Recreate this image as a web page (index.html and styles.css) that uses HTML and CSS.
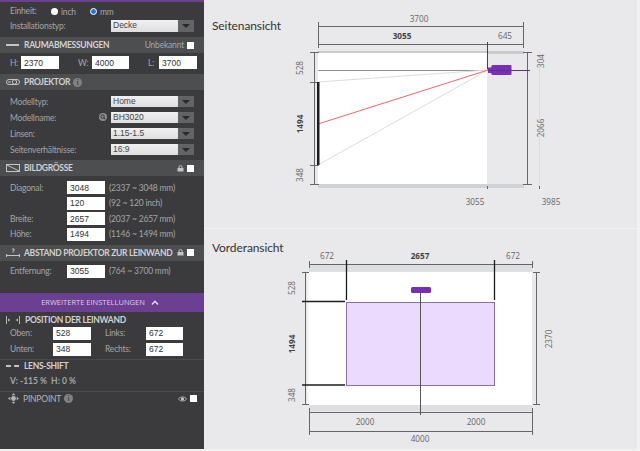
FILE: index.html
```html
<!DOCTYPE html>
<html lang="de">
<head>
    <meta charset="UTF-8">
    <meta name="viewport" content="width=device-width, initial-scale=1.0">
    <title>Projektionsrechner</title>
    <link rel="stylesheet" href="styles.css">
</head>
<body>
    <div class="app">
        <aside class="sidebar">
            <div class="unit-row">
                <span class="label unit-label">Einheit:</span>
                <input type="radio" name="unit" class="radio">
                <span class="label unit-name">inch</span>
                <input type="radio" name="unit" class="radio" checked>
                <span class="label unit-name">mm</span>
            </div>
            <div class="select-row install-row">
                <span class="label">Installationstyp:</span>
                <div class="select"><span>Decke</span><i></i></div>
            </div>

            <div class="sec-head room-head">
                <svg class="sec-icon" viewBox="0 0 14 10"><rect x="0" y="4" width="13" height="2" fill="#c4c4c4"/></svg>
                <span class="sec-title">RAUMABMESSUNGEN</span>
                <span class="label head-right">Unbekannt</span>
                <input type="checkbox" class="check">
            </div>
            <div class="room-row">
                <span class="label">H:</span><input type="text" class="field" value="2370">
                <span class="label">W:</span><input type="text" class="field" value="4000">
                <span class="label">L:</span><input type="text" class="field" value="3700">
            </div>

            <div class="sec-head">
                <svg class="sec-icon" viewBox="0 0 14 10" fill="none" stroke="#c4c4c4"><rect x="0.5" y="2.5" width="13" height="5" rx="2.5"/><circle cx="8.5" cy="5" r="2.2"/><line x1="2" y1="5" x2="5" y2="5"/></svg>
                <span class="sec-title">PROJEKTOR</span>
                <span class="info">i</span>
            </div>
            <div class="select-list">
                <div class="select-row">
                    <span class="label">Modelltyp:</span>
                    <div class="select"><span>Home</span><i></i></div>
                </div>
                <div class="select-row">
                    <span class="label">Modellname:</span>
                    <svg class="search" viewBox="0 0 8 8" fill="none" stroke="#2f2f30"><circle cx="4" cy="4" r="4" fill="#8d8d8d" stroke="none"/><circle cx="3.6" cy="3.6" r="1.7"/><line x1="4.9" y1="4.9" x2="6.4" y2="6.4"/></svg>
                    <div class="select"><span>BH3020</span><i></i></div>
                </div>
                <div class="select-row">
                    <span class="label">Linsen:</span>
                    <div class="select"><span>1.15-1.5</span><i></i></div>
                </div>
                <div class="select-row">
                    <span class="label">Seitenverhältnisse:</span>
                    <div class="select"><span>16:9</span><i></i></div>
                </div>
            </div>

            <div class="sec-head size-head">
                <svg class="sec-icon" viewBox="0 0 14 10" fill="none" stroke="#c4c4c4"><rect x="0.5" y="1.5" width="13" height="7"/><line x1="1" y1="2" x2="13" y2="8"/></svg>
                <span class="sec-title">BILDGRÖSSE</span>
                <svg class="lock head-right" viewBox="0 0 7 7" fill="none" stroke="#c4c4c4"><path d="M2 3V2a1.5 1.5 0 0 1 3 0v1"/><rect x="0.5" y="3" width="6" height="3.5" fill="#c4c4c4" stroke="none"/></svg>
                <input type="checkbox" class="check">
            </div>
            <div class="size-list">
                <div class="size-row">
                    <span class="label">Diagonal:</span><input type="text" class="field" value="3048">
                    <span class="label">(2337 ~ 3048 mm)</span>
                </div>
                <div class="size-row">
                    <span class="label"></span><input type="text" class="field" value="120">
                    <span class="label">(92 ~ 120 inch)</span>
                </div>
                <div class="size-row">
                    <span class="label">Breite:</span><input type="text" class="field" value="2657">
                    <span class="label">(2037 ~ 2657 mm)</span>
                </div>
                <div class="size-row">
                    <span class="label">Höhe:</span><input type="text" class="field" value="1494">
                    <span class="label">(1146 ~ 1494 mm)</span>
                </div>
            </div>

            <div class="sec-head">
                <svg class="sec-icon" viewBox="0 0 14 10" fill="none" stroke="#c4c4c4"><path d="M0.5 6v3M13.5 6v3M0.5 7.5h13"/><path d="M6 1h2v2H7v1.5"/></svg>
                <span class="sec-title">ABSTAND PROJEKTOR ZUR LEINWAND</span>
                <svg class="lock head-right" viewBox="0 0 7 7" fill="none" stroke="#c4c4c4"><path d="M2 3V2a1.5 1.5 0 0 1 3 0v1"/><rect x="0.5" y="3" width="6" height="3.5" fill="#c4c4c4" stroke="none"/></svg>
                <input type="checkbox" class="check">
            </div>
            <div class="size-row distance-row">
                <span class="label">Entfernung:</span><input type="text" class="field" value="3055">
                <span class="label">(764 ~ 3700 mm)</span>
            </div>

            <div class="advanced">
                <span>ERWEITERTE EINSTELLUNGEN</span>
                <svg viewBox="0 0 8 5" fill="none" stroke="#e4dcec" stroke-width="1.4"><path d="M1 4.5L4 1.2L7 4.5"/></svg>
            </div>

            <div class="plain-head position-head">
                <svg class="pos-icon" viewBox="0 0 14 8" fill="#b4b4b4"><rect x="0" y="0" width="1" height="8"/><path d="M2 2.5L4.5 4L2 5.5Z"/><rect x="13" y="0" width="1" height="8"/><path d="M12 2.5L9.5 4L12 5.5Z"/></svg>
                <span class="sec-title">POSITION DER LEINWAND</span>
            </div>
            <div class="position-grid">
                <span class="label">Oben:</span><input type="text" class="field" value="528">
                <span class="label">Links:</span><input type="text" class="field" value="672">
                <span class="label">Unten:</span><input type="text" class="field" value="348">
                <span class="label">Rechts:</span><input type="text" class="field" value="672">
            </div>

            <div class="lens">
                <div class="plain-head">
                    <span class="dashes"></span>
                    <span class="sec-title">LENS-SHIFT</span>
                </div>
                <div class="lens-values">V: -115 %&nbsp; H: 0 %</div>
            </div>

            <div class="pinpoint">
                <svg class="pin-icon" viewBox="0 0 12 12" fill="#b4b4b4"><path d="M6 0L8 2.5H4ZM6 12L4 9.5H8ZM0 6L2.5 4V8ZM12 6L9.5 8V4Z"/><circle cx="6" cy="6" r="2.6"/></svg>
                <span class="pin-title">PINPOINT</span>
                <span class="info">i</span>
                <svg class="eye head-right" viewBox="0 0 10 6" fill="none" stroke="#c4c4c4"><path d="M0.5 3C3 0 7 0 9.5 3C7 6 3 6 0.5 3Z"/><circle cx="5" cy="3" r="1.3" fill="#c4c4c4"/></svg>
                <input type="checkbox" class="check">
            </div>
        </aside>

        <main class="views">
            <section class="view side-view">
                <h2>Seitenansicht</h2>
                <svg class="drawing" viewBox="285 0 352 228">
                    <rect x="318" y="51" width="206" height="3" fill="#c9cbcf"/>
                    <rect x="318" y="184" width="206" height="4" fill="#d0d2d5"/>
                    <rect x="318" y="53" width="169" height="131" fill="#fff"/>
                    <line x1="539.5" y1="52" x2="539.5" y2="188" stroke="#dcdcde"/>

                    <g class="dim">
                        <path d="M318.5 22V48M523.5 22V48M318 26.500H524M318 44.500H524"/>
                        <path d="M314.500 52V185M310 52.500H319M310 82.500H319M310 165.500H319M310 184.500H319"/>
                        <path d="M527.500 52V185M523 52.500H532M523 184.500H532"/>
                        <path d="M487.500 186V189M539.500 186V189"/>
                    </g>
                    <line x1="487.500" y1="42" x2="487.500" y2="70" stroke="#444"/>
                    <path d="M318 70.500H479M487 70.500H530" stroke="#909090" fill="none"/>

                    <line x1="318" y1="82" x2="488" y2="70" stroke="#ddd"/>
                    <line x1="318" y1="165" x2="488" y2="70" stroke="#ddd"/>
                    <line x1="318" y1="124" x2="488" y2="70" stroke="#f4646c"/>
                    <rect x="317" y="82" width="2.500" height="83" fill="#1c1c1c"/>

                    <path d="M488 67.500H491L492 65H510.500Q511.500 65 511.500 66V74Q511.500 75 510.500 75H492L491 73H488Z" fill="#7a2dbb"/>
                    <line x1="488" y1="70.500" x2="530" y2="70.500" stroke="#553a70"/>

                    <text x="419" y="22" class="num" text-anchor="middle">3700</text>
                    <text x="402" y="39" class="num strong" text-anchor="middle">3055</text>
                    <text x="505" y="39" class="num" text-anchor="middle">645</text>
                    <text x="475" y="205" class="num" text-anchor="middle">3055</text>
                    <text x="551" y="205" class="num" text-anchor="middle">3985</text>
                    <text transform="translate(303 68) rotate(-90)" class="num" text-anchor="middle">528</text>
                    <text transform="translate(303 124) rotate(-90)" class="num strong" text-anchor="middle">1494</text>
                    <text transform="translate(303 175) rotate(-90)" class="num" text-anchor="middle">348</text>
                    <text transform="translate(544 61) rotate(-90)" class="num" text-anchor="middle">304</text>
                    <text transform="translate(544 128) rotate(-90)" class="num" text-anchor="middle">2066</text>
                </svg>
            </section>

            <section class="view front-view">
                <h2>Vorderansicht</h2>
                <svg class="drawing" viewBox="285 229 352 220">
                    <rect x="309" y="265" width="223" height="7" fill="#dedfe1"/>
                    <rect x="309" y="405" width="223" height="6" fill="#dedfe1"/>
                    <rect x="307" y="272" width="2" height="133" fill="#f4f4f5"/>
                    <rect x="309" y="272" width="223" height="133" fill="#fff"/>
                    <rect x="346.500" y="302.500" width="148" height="83" fill="#ecd9fe" stroke="#8a70a6"/>

                    <g class="dim">
                        <path d="M309 264.500H532M309.500 261V268M532.500 261V268"/>
                        <path d="M305.500 272V405M302 272.500H309M302 404.500H309"/>
                        <path d="M536.500 272V405M533 272.500H540M533 404.500H540"/>
                        <path d="M309.500 408V435M532.500 408V435M309 412.500H532M309 431.500H532"/>
                    </g>
                    <g class="bold-dim">
                        <path d="M346.500 260V300M494.500 260V300M302 301.500H345M302 385H345"/>
                    </g>
                    <line x1="420.500" y1="292" x2="420.500" y2="415" stroke="#555"/>
                    <rect x="411" y="287" width="20" height="6" rx="1.500" fill="#7a2dbb"/>

                    <text x="327" y="259" class="num" text-anchor="middle">672</text>
                    <text x="420" y="259" class="num strong" text-anchor="middle">2657</text>
                    <text x="513" y="259" class="num" text-anchor="middle">672</text>
                    <text x="365" y="425" class="num" text-anchor="middle">2000</text>
                    <text x="476" y="425" class="num" text-anchor="middle">2000</text>
                    <text x="420" y="442" class="num" text-anchor="middle">4000</text>
                    <text transform="translate(295 288) rotate(-90)" class="num" text-anchor="middle">528</text>
                    <text transform="translate(295 344) rotate(-90)" class="num strong" text-anchor="middle">1494</text>
                    <text transform="translate(295 395) rotate(-90)" class="num" text-anchor="middle">348</text>
                    <text transform="translate(552 339) rotate(-90)" class="num" text-anchor="middle">2370</text>
                </svg>
            </section>
        </main>
    </div>
</body>
</html>
```

FILE: styles.css
```css
* {
    box-sizing: border-box;
}

body {
    margin: 0;
    background-color: #f1f1f2;
    font-family: Lato, "Liberation Sans", sans-serif;
}

.app {
    display: flex;
    width: 640px;
    height: 449px;
    overflow: hidden;
}

/* Left settings panel */
.sidebar {
    width: 204px;
    flex: none;
    background-color: #3b3b3d;
    border-top: 2px solid #6b3f92;
}

.label {
    font-size: 8.500px;
    letter-spacing: -0.200px;
    line-height: 12px;
    color: #a3a6a8;
    white-space: nowrap;
}

.field {
    height: 13px;
    padding: 0 3px;
    border: none;
    border-radius: 0;
    background-color: #fff;
    color: #333;
    font-family: "Liberation Sans", sans-serif;
    font-size: 8.500px;
}

.check {
    appearance: none;
    width: 7px;
    height: 7px;
    margin: 0;
    background-color: #fff;
    flex: none;
}

.radio {
    appearance: none;
    width: 7px;
    height: 7px;
    margin: 0;
    border-radius: 50%;
    background-color: #fff;
}

.radio:checked {
    border: 1.500px solid #fff;
    background-color: #1976e0;
}

.unit-row {
    display: flex;
    align-items: center;
    height: 12px;
    margin-top: 3px;
    padding-left: 10px;
}

.unit-label {
    width: 41px;
}

.unit-name {
    width: 32px;
    padding: 2px 0 0 3px;
}

.select-row {
    display: flex;
    align-items: center;
    height: 11px;
    padding-left: 10px;
    position: relative;
}

.install-row {
    margin-top: 3px;
    height: 12px;
}

.select {
    position: absolute;
    left: 111px;
    top: 0;
    width: 83px;
    height: 100%;
    display: flex;
    background: linear-gradient(#f0f0f0, #dedede);
    font-family: "Liberation Sans", sans-serif;
    font-size: 8.500px;
    line-height: 11px;
    color: #444;
}

.select span {
    flex: 1;
    padding-left: 2px;
}

.select i {
    position: relative;
    width: 16px;
    background-color: #636466;
}

.select i::after {
    content: "";
    position: absolute;
    left: 4px;
    top: 4px;
    border-left: 4px solid transparent;
    border-right: 4px solid transparent;
    border-top: 4px solid #2a2a2a;
}

.select-list {
    display: flex;
    flex-direction: column;
    gap: 5px;
    margin-top: 6px;
}

.search {
    position: absolute;
    left: 99px;
    top: 1px;
    width: 8px;
    height: 8px;
}

.sec-head {
    display: flex;
    align-items: center;
    height: 16px;
    padding: 0 10px 0 6px;
    background-color: #4d4e50;
}

.room-head {
    margin-top: 5px;
}

.size-head {
    margin-top: 5px;
}

.sec-icon {
    width: 14px;
    height: 10px;
    flex: none;
    margin-right: 4px;
}

.sec-title {
    font-size: 8.500px;
    font-weight: 700;
    letter-spacing: -0.300px;
    line-height: 12px;
    color: #d0d2d3;
    white-space: nowrap;
}

.head-right {
    margin-left: auto;
    margin-right: 3px;
}

.info {
    display: inline-block;
    width: 9px;
    height: 9px;
    margin-left: 3px;
    border-radius: 50%;
    background-color: #808284;
    color: #3b3b3d;
    font-size: 7px;
    font-weight: 700;
    line-height: 9px;
    text-align: center;
}

.lock {
    width: 7px;
    height: 7px;
    flex: none;
}

.room-row {
    display: grid;
    grid-template-columns: 11px 38px 33px 37px 30px 38px;
    align-items: center;
    height: 21px;
    padding: 0 0 2px 10px;
}

.room-row .label:nth-child(3),
.room-row .label:nth-child(5) {
    padding-left: 19px;
}

.size-list {
    display: flex;
    flex-direction: column;
    gap: 2.600px;
    margin: 5px 0 4px;
}

.size-row {
    display: grid;
    grid-template-columns: 57px 38px auto;
    align-items: center;
    height: 13px;
    padding-left: 10px;
}

.size-row .label:last-child {
    padding-left: 4px;
}

.distance-row {
    margin-top: 4px;
}

.advanced {
    display: flex;
    align-items: center;
    justify-content: center;
    gap: 6px;
    height: 19px;
    margin-top: 15px;
    padding-right: 4px;
    background-color: #6b3f92;
    color: #d8cfe2;
    font-family: "Open Sans", sans-serif;
    font-size: 7.500px;
}

.advanced svg {
    width: 8px;
    height: 5px;
}

.plain-head {
    display: flex;
    align-items: center;
    height: 12px;
    padding-left: 6px;
}

.position-head {
    margin-top: 2px;
}

.pos-icon {
    width: 14px;
    height: 8px;
    margin-right: 5px;
}

.position-grid {
    display: grid;
    grid-template-columns: 43px 38px 55px 37px;
    grid-auto-rows: 13px;
    row-gap: 3px;
    align-items: center;
    margin-top: 1px;
    padding: 0 0 3px 10px;
    border-bottom: 1px solid #4a4b4d;
}

.position-grid .label:nth-child(3),
.position-grid .label:nth-child(7) {
    padding-left: 14px;
}

.lens {
    height: 32px;
    border-bottom: 1px solid #4a4b4d;
}

.dashes {
    width: 13px;
    margin-right: 5px;
    border-top: 2px dashed #c4c4c4;
}

.lens-values {
    margin-top: 3px;
    padding-left: 10px;
    font-size: 8.500px;
    font-weight: 700;
    line-height: 12px;
    color: #a3a6a8;
}

.pinpoint {
    display: flex;
    align-items: center;
    height: 14px;
    padding: 0 7px 0 8px;
}

.pin-icon {
    width: 11px;
    height: 11px;
    margin-right: 4px;
}

.pin-title {
    font-size: 8.500px;
    letter-spacing: -0.200px;
    line-height: 12px;
    color: #b4b6b7;
}

.eye {
    width: 9px;
    height: 6px;
}

/* Drawings */
.views {
    width: 433px;
    flex: none;
    background-color: #e9e9eb;
}

.view {
    display: flex;
}

.side-view {
    height: 229px;
    border-bottom: 1px solid #f1f1f2;
}

.front-view {
    height: 220px;
}

.view h2 {
    width: 81px;
    flex: none;
    margin: 0;
    padding: 18px 0 0 8px;
    font-size: 12px;
    font-weight: 400;
    letter-spacing: -0.100px;
    line-height: 16px;
    color: #333;
    white-space: nowrap;
}

.front-view h2 {
    padding-top: 11px;
}

.drawing {
    width: 352px;
    height: 100%;
    flex: none;
}

.dim {
    fill: none;
    stroke: #666;
}

.bold-dim {
    fill: none;
    stroke: #1d1d1d;
    stroke-width: 1.300;
}

.num {
    font-family: "Open Sans", "Liberation Sans", sans-serif;
    font-size: 8.200px;
    fill: #666;
}

.strong {
    font-weight: 700;
    fill: #444;
}
```
